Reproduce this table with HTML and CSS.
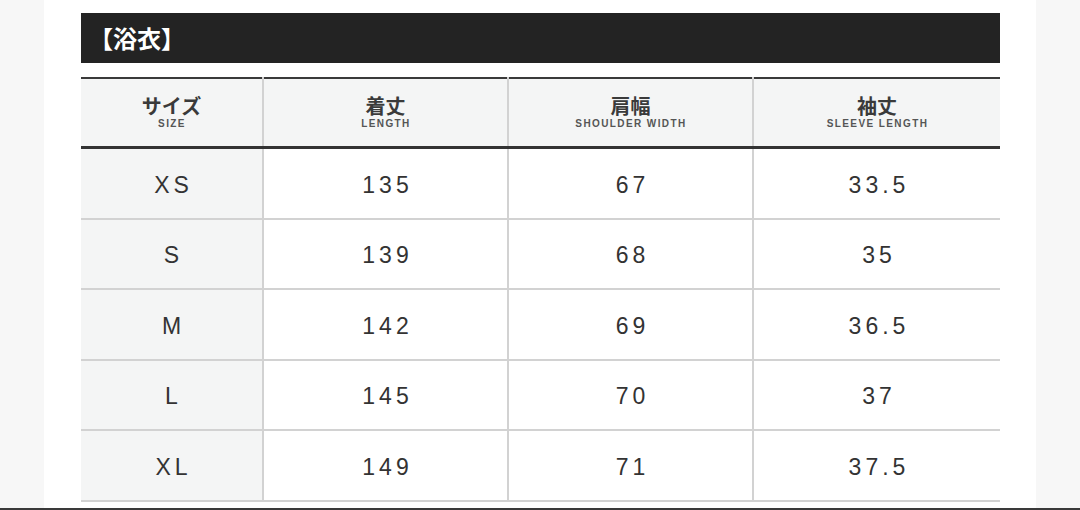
FILE: index.html
```html
<!DOCTYPE html>
<html lang="ja">
<head>
<meta charset="utf-8">
<link rel="stylesheet" href="styles.css">
</head>
<body>
<div class="page">
  <div class="title">【浴衣】</div>
  <table class="sizes">
    <thead>
      <tr>
        <th class="c1"><span class="jp">サイズ</span><span class="en">SIZE</span></th>
        <th class="c2"><span class="jp">着丈</span><span class="en">LENGTH</span></th>
        <th class="c3"><span class="jp">肩幅</span><span class="en">SHOULDER WIDTH</span></th>
        <th class="c4"><span class="jp">袖丈</span><span class="en">SLEEVE LENGTH</span></th>
      </tr>
    </thead>
    <tbody>
      <tr><td class="sz">XS</td><td>135</td><td>67</td><td>33.5</td></tr>
      <tr><td class="sz">S</td><td>139</td><td>68</td><td>35</td></tr>
      <tr><td class="sz">M</td><td>142</td><td>69</td><td>36.5</td></tr>
      <tr><td class="sz">L</td><td>145</td><td>70</td><td>37</td></tr>
      <tr><td class="sz">XL</td><td>149</td><td>71</td><td>37.5</td></tr>
    </tbody>
  </table>
</div>
<div class="bottom-bar"></div>
</body>
</html>
```
FILE: styles.css
```css
html, body {
  margin: 0;
  padding: 0;
}
body {
  background: #f7f7f7;
  width: 1080px;
  height: 510px;
  overflow: hidden;
  position: relative;
  font-family: "Liberation Sans", "Noto Sans CJK JP", sans-serif;
  color: #333;
}
.page {
  margin-left: 44px;
  width: 992px;
  height: 510px;
  background: #fff;
  padding: 13px 0 0 37px;
  box-sizing: border-box;
}
.title {
  width: 919px;
  height: 50px;
  background: #232323;
  color: #fff;
  font-family: "Noto Sans CJK JP", sans-serif;
  font-weight: 700;
  font-size: 24px;
  line-height: 50px;
  padding-left: 8px;
  box-sizing: border-box;
}
.sizes {
  margin-top: 14px;
  width: 919px;
  border-collapse: collapse;
  table-layout: fixed;
  border-top: 2px solid #3a3a3a;
}
.sizes th {
  background: #f4f5f5;
  height: 67px;
  padding: 0;
  border-bottom: 3px solid #333;
  border-left: 2px solid #d2d2d2;
  vertical-align: middle;
  text-align: center;
}
.sizes th:first-child, .sizes td:first-child {
  border-left: none;
}
.sizes .c1 { width: 181px; }
.sizes .c2 { width: 243px; }
.sizes .c3 { width: 243px; }
.jp {
  display: block;
  font-family: "Noto Sans CJK JP", sans-serif;
  font-weight: 700;
  font-size: 20px;
  line-height: 22px;
  color: #3a3a3a;
}
.en {
  display: block;
  font-family: "Liberation Sans", sans-serif;
  font-weight: 700;
  font-size: 10px;
  line-height: 12px;
  letter-spacing: 1.4px;
  color: #555;
  margin-top: 1px;
  padding-left: 1px;
}
.sizes td {
  height: 64.5px;
  padding: 4px 0 0 4px;
  border-bottom: 2px solid #d2d2d2;
  border-left: 2px solid #d2d2d2;
  text-align: center;
  vertical-align: middle;
  font-size: 23px;
  letter-spacing: 4px;
  color: #333;
  background: #fff;
}
.sizes td.sz {
  background: #f4f5f5;
}
.bottom-bar {
  position: absolute;
  left: 0;
  bottom: 0;
  width: 1080px;
  height: 2px;
  background: #3a3a3a;
}
```
